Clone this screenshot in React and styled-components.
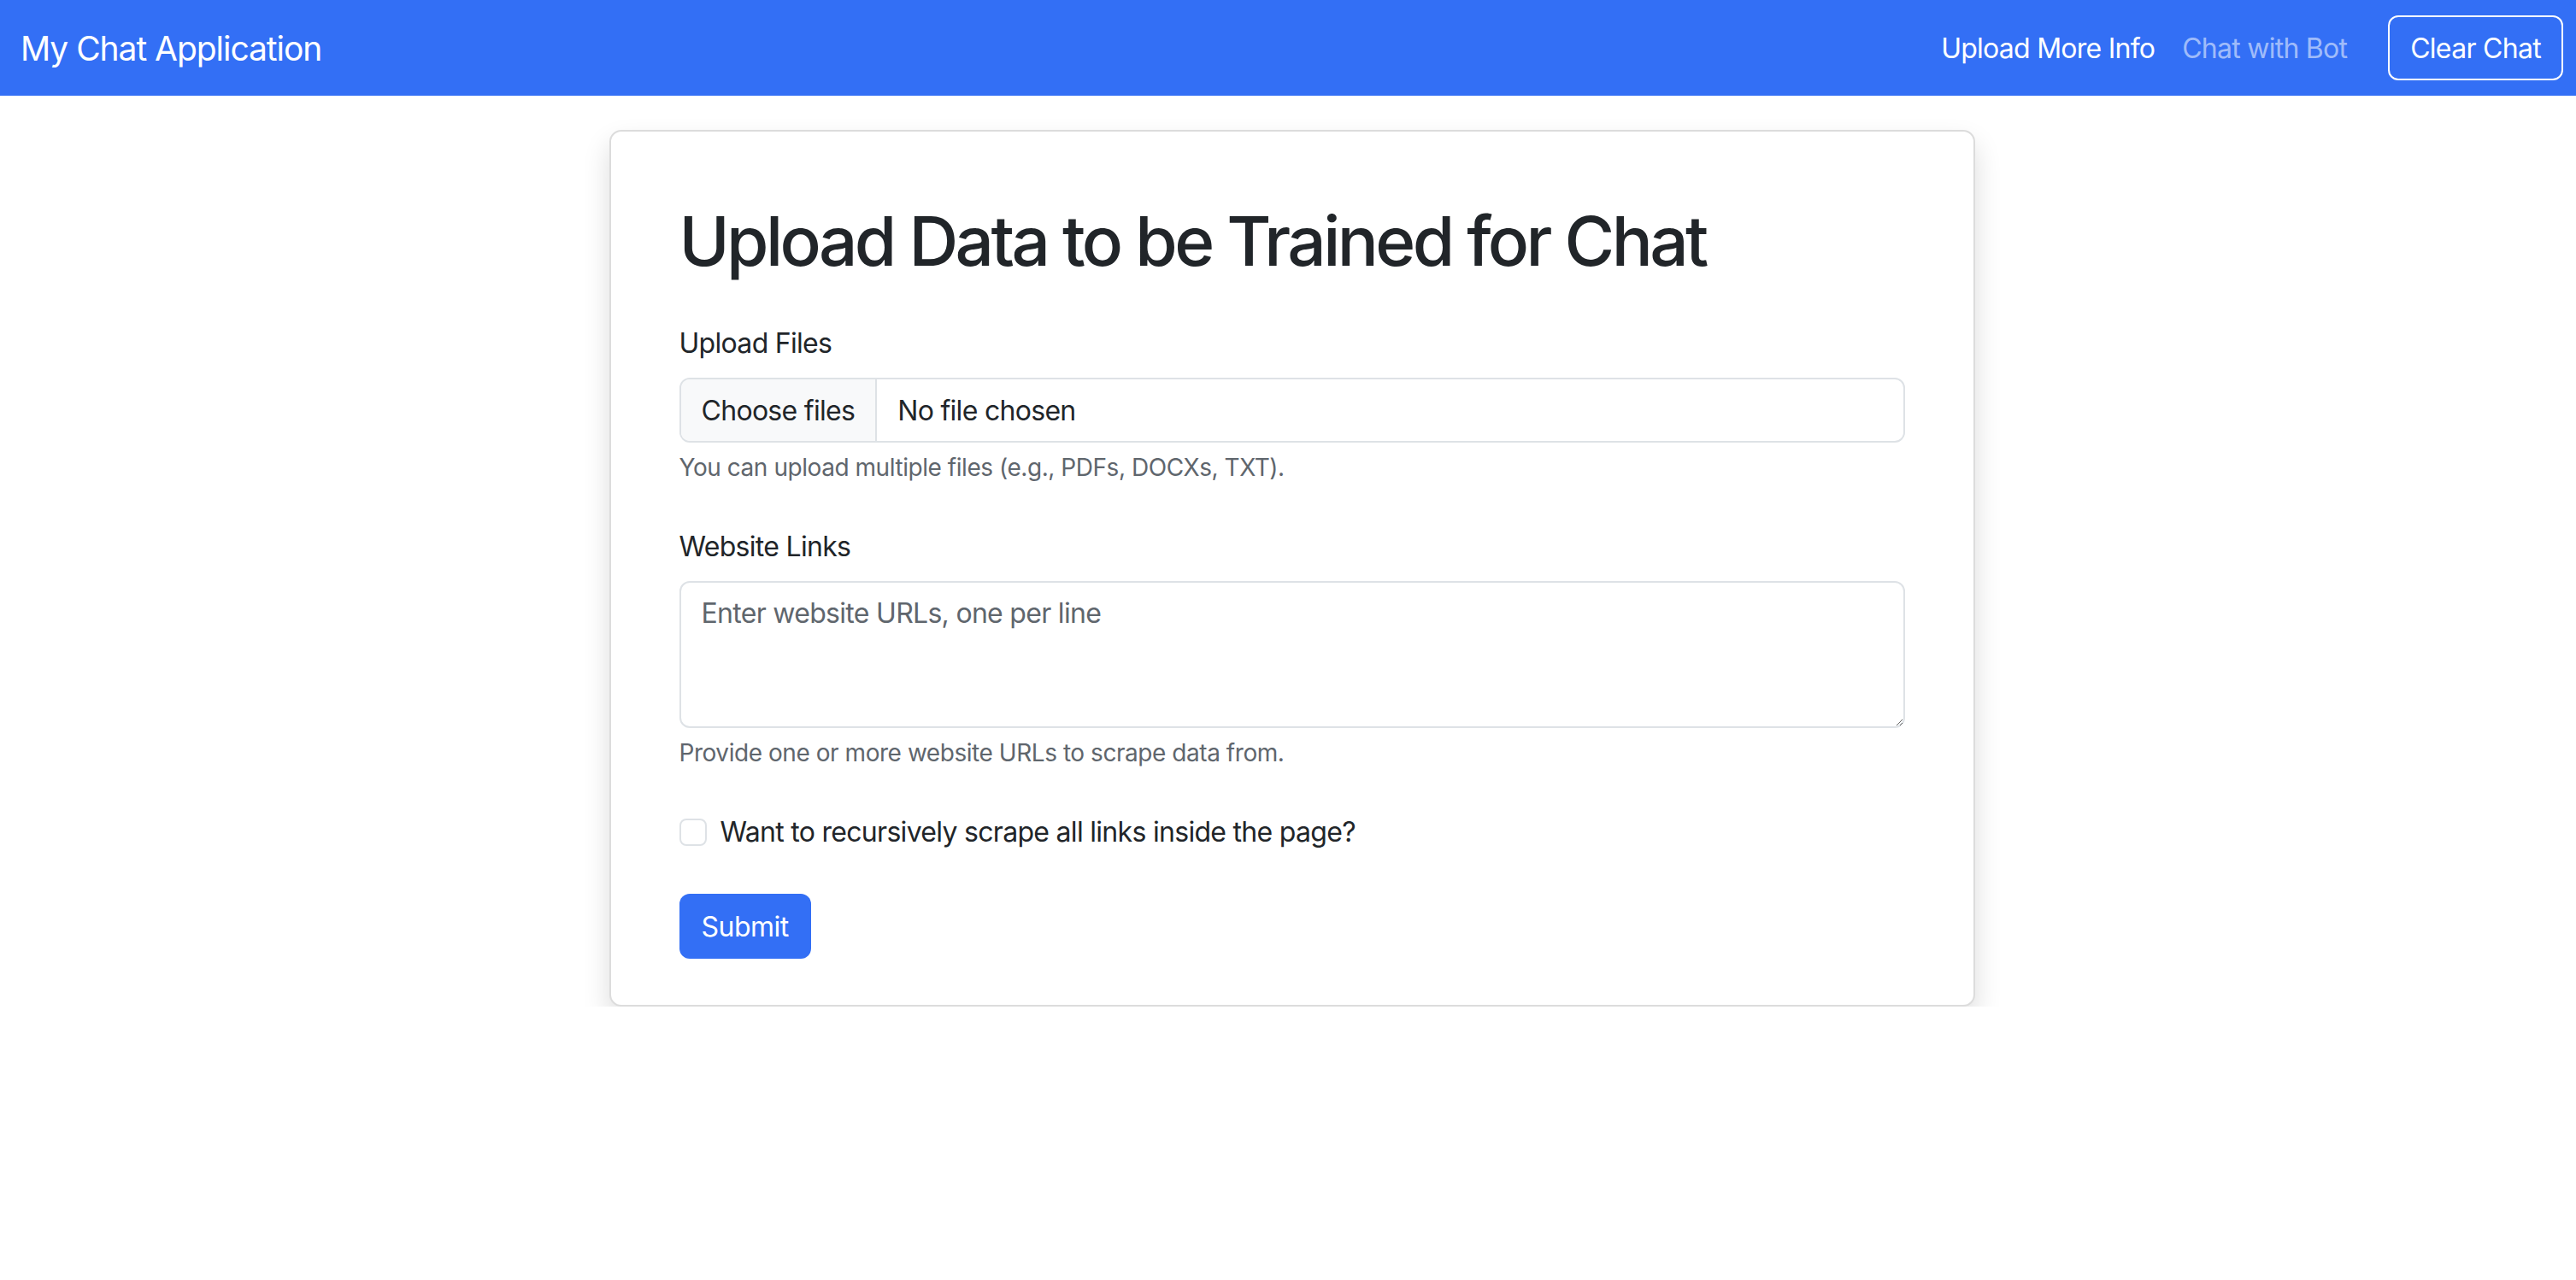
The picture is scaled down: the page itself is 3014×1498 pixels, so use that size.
import React from "react";
import styled, { createGlobalStyle } from "styled-components";

const GlobalStyle = createGlobalStyle`
  html, body { margin: 0; padding: 0; background: #ffffff; }
  body {
    font-family: Inter, "Noto Sans", "Liberation Sans", sans-serif;
    color: #212529;
    -webkit-font-smoothing: antialiased;
  }
  * { box-sizing: border-box; }
`;

const Navbar = styled.nav`
  height: 112px;
  background: #336ff5;
  display: flex;
  align-items: center;
  justify-content: space-between;
  padding: 0 15px 0 24px;
`;

const Brand = styled.a`
  color: #ffffff;
  font-size: 39px;
  text-decoration: none;
  letter-spacing: -1.05px;
`;

const NavRight = styled.div`
  display: flex;
  align-items: center;
`;

const NavLink = styled.a`
  font-size: 32px;
  padding: 0 16px;
  text-decoration: none;
  letter-spacing: -0.75px;
  color: ${(p) => (p.$active ? "#ffffff" : "rgba(255,255,255,0.55)")};
`;

const OutlineButton = styled.button`
  margin-left: 32px;
  height: 76px;
  padding: 0 24px;
  border: 2px solid #ffffff;
  border-radius: 12px;
  background: transparent;
  color: #ffffff;
  font-family: inherit;
  font-size: 32px;
  letter-spacing: -0.7px;
`;

const Main = styled.main`
  display: flex;
  justify-content: center;
  padding: 40px 0 0 9px;
`;

const Card = styled.section`
  width: 1598px;
  border: 2px solid #dcdcdc;
  border-radius: 14px;
  background: #ffffff;
  box-shadow: 0 16px 32px rgba(0, 0, 0, 0.14);
  padding: 80px 80px 54px 80px;
`;

const Title = styled.h1`
  margin: 0 0 48px 0;
  font-size: 80px;
  line-height: 96px;
  font-weight: 500;
  letter-spacing: -3.6px;
  color: #212529;
`;

const Group = styled.div`
  margin-bottom: 48px;
`;

const Label = styled.label`
  display: block;
  font-size: 32px;
  line-height: 48px;
  margin-bottom: 16px;
  letter-spacing: -0.7px;
`;

const FileField = styled.label`
  display: flex;
  height: 76px;
  border: 2px solid #dee2e6;
  border-radius: 12px;
  overflow: hidden;
  font-size: 32px;
  letter-spacing: -0.7px;
  color: #212529;
  cursor: pointer;
`;

const FileButton = styled.span`
  display: flex;
  align-items: center;
  padding: 0 24px;
  background: #f8f9fa;
  border-right: 2px solid #dee2e6;
`;

const FileName = styled.span`
  display: flex;
  align-items: center;
  padding: 0 24px;
`;

const HiddenInput = styled.input`
  display: none;
`;

const Help = styled.div`
  margin-top: 8px;
  font-size: 28px;
  line-height: 42px;
  color: #5f666d;
  letter-spacing: -0.45px;
`;

const TextArea = styled.textarea`
  display: block;
  width: 100%;
  height: 172px;
  padding: 12px 24px;
  border: 2px solid #dee2e6;
  border-radius: 12px;
  font-family: inherit;
  font-size: 32px;
  line-height: 48px;
  letter-spacing: -0.7px;
  color: #212529;
  resize: vertical;
  &::placeholder { color: #5f666d; }
`;

const CheckRow = styled.div`
  display: flex;
  align-items: flex-start;
  gap: 16px;
  margin-bottom: 48px;
`;

const Check = styled.input`
  appearance: none;
  margin: 8px 0 0 0;
  width: 32px;
  height: 32px;
  border: 2px solid #dee2e6;
  border-radius: 8px;
  background: #ffffff;
  flex: none;
`;

const CheckLabel = styled.label`
  font-size: 32px;
  line-height: 48px;
  letter-spacing: -0.7px;
`;

const PrimaryButton = styled.button`
  height: 76px;
  padding: 0 26px;
  border: none;
  border-radius: 12px;
  background: #336ff5;
  color: #ffffff;
  font-family: inherit;
  font-size: 32px;
  letter-spacing: -0.5px;
`;

export default function App() {
  return (
    <>
      <GlobalStyle />
      <Navbar>
        <Brand href="#">My Chat Application</Brand>
        <NavRight>
          <NavLink href="#" $active>Upload More Info</NavLink>
          <NavLink href="#">Chat with Bot</NavLink>
          <OutlineButton type="button">Clear Chat</OutlineButton>
        </NavRight>
      </Navbar>
      <Main>
        <Card>
          <Title>Upload Data to be Trained for Chat</Title>
          <form onSubmit={(e) => e.preventDefault()}>
            <Group>
              <Label htmlFor="files">Upload Files</Label>
              <FileField htmlFor="files">
                <FileButton>Choose files</FileButton>
                <FileName>No file chosen</FileName>
                <HiddenInput id="files" type="file" multiple />
              </FileField>
              <Help>You can upload multiple files (e.g., PDFs, DOCXs, TXT).</Help>
            </Group>
            <Group>
              <Label htmlFor="links">Website Links</Label>
              <TextArea id="links" rows={3} placeholder="Enter website URLs, one per line" />
              <Help>Provide one or more website URLs to scrape data from.</Help>
            </Group>
            <CheckRow>
              <Check id="recursive" type="checkbox" />
              <CheckLabel htmlFor="recursive">Want to recursively scrape all links inside the page?</CheckLabel>
            </CheckRow>
            <PrimaryButton type="submit">Submit</PrimaryButton>
          </form>
        </Card>
      </Main>
    </>
  );
}
